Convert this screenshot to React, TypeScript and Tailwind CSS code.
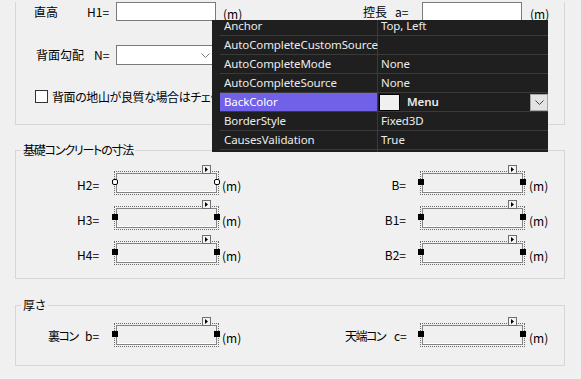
import React from "react";

function DesignBox({ primary = false }: { primary?: boolean }) {
  const handle = primary
    ? "absolute top-[7px] w-[6px] h-[6px] bg-white border border-black rounded-[2px]"
    : "absolute top-[7px] w-[6px] h-[6px] bg-black";
  return (
    <div className="relative shrink-0 w-[105px] h-[24px] border border-dotted border-[#6b6b6b] p-[1px]">
      <div className="w-full h-full border border-[#858585] bg-[#f0f0f0] shadow-[inset_0_-1px_0_#ffffff]" />
      <div className={handle + " left-[-3px]"} />
      <div className={handle + " left-[99px]"} />
      <div className="absolute left-[87px] top-[-7px] w-[9px] h-[9px] border border-[#6f6f6f] bg-[#f4f4f4] flex items-center justify-center">
        <svg width="3" height="5" viewBox="0 0 3 5">
          <path d="M0 0 L3 2.5 L0 5Z" fill="#000" />
        </svg>
      </div>
    </div>
  );
}

function Chevron({ color = "#555" }: { color?: string }) {
  return (
    <svg width="9" height="5" viewBox="0 0 9 5">
      <path d="M0.5 0.5 L4.5 4.5 L8.5 0.5" fill="none" stroke={color} strokeWidth="1" />
    </svg>
  );
}

type Row = { name: string; value?: string; color?: boolean; selected?: boolean };

const rows: Row[] = [
  { name: "Anchor", value: "Top, Left" },
  { name: "AutoCompleteCustomSource", value: "" },
  { name: "AutoCompleteMode", value: "None" },
  { name: "AutoCompleteSource", value: "None" },
  { name: "BackColor", color: true, selected: true },
  { name: "BorderStyle", value: "Fixed3D" },
  { name: "CausesValidation", value: "True" },
  { name: "", value: "" },
];

function PropertyGrid() {
  return (
    <div className="absolute left-[212px] top-[20px] w-[336px] h-[132px] bg-[#1f1f1f] overflow-hidden font-['Noto_Sans','Open_Sans',sans-serif] text-[11.5px] tracking-[-0.1px] text-[#ececec]">
      <div className="-mt-[3px]">
        {rows.map((r, i) => (
          <div key={i} className="flex ml-[8px] h-[19px] border-b border-[#3a3a3a]">
            <div
              className={
                r.selected
                  ? "w-[158px] shrink-0 border-r border-[#3a3a3a] pl-[4px] flex items-center bg-[#7160e8] text-white"
                  : "w-[158px] shrink-0 border-r border-[#3a3a3a] pl-[4px] flex items-center"
              }
            >
              {r.name}
            </div>
            {r.color ? (
              <div className="flex-1 flex items-center pl-[1px]">
                <div className="w-[21px] h-[17px] border border-black bg-[#f0f0f0]" />
                <span className="ml-[7px] font-semibold">Menu</span>
                <div className="ml-auto w-[18px] h-[17px] bg-[#e3e3e3] border border-[#a8a8a8] flex items-center justify-center">
                  <Chevron color="#444" />
                </div>
              </div>
            ) : (
              <div className="flex-1 flex items-center pl-[3px]">{r.value}</div>
            )}
          </div>
        ))}
      </div>
    </div>
  );
}

function DimRow({
  left,
  right,
  primary = false,
}: {
  left: string;
  right: string;
  primary?: boolean;
}) {
  return (
    <div className="flex items-center h-[24px]">
      <span className="ml-[61px] mt-[4px] w-[37px] shrink-0">{left}</span>
      <DesignBox primary={primary} />
      <span className="ml-[3px] mt-[5px] w-[40px] shrink-0">(m)</span>
      <span className="mt-[4px] w-[144px] shrink-0 text-right">{right}</span>
      <div className="ml-[14px]">
        <DesignBox />
      </div>
      <span className="ml-[4px] mt-[5px]">(m)</span>
    </div>
  );
}

export default function App() {
  return (
    <div className="relative w-[581px] h-[379px] overflow-hidden bg-[#f0f0f0] text-black text-[12px] leading-[14px] font-['Noto_Sans_CJK_JP','Noto_Sans',sans-serif] [font-feature-settings:'palt']">
      {/* top panel */}
      <div className="ml-[15px] w-[550px] h-[123px] border-x border-b border-[#d6d6d6]">
        <div className="flex items-center h-[19px] mt-[2px]">
          <span className="ml-[18px] w-[53px] shrink-0">直高</span>
          <span className="w-[29px] shrink-0">H1=</span>
          <div className="w-[100px] h-[19px] shrink-0 bg-white border border-[#7a7a7a]" />
          <span className="ml-[7px] mt-[4px] w-[140px] shrink-0">(m)</span>
          <span className="w-[32px] shrink-0">控長</span>
          <span className="w-[27px] shrink-0">a=</span>
          <div className="w-[100px] h-[19px] shrink-0 bg-white border border-[#7a7a7a]" />
          <span className="ml-[8px] mt-[4px]">(m)</span>
        </div>
        <div className="flex items-center h-[20px] mt-[24px]">
          <span className="ml-[20px] w-[58px] shrink-0">背面勾配</span>
          <span className="w-[22px] shrink-0">N=</span>
          <div className="w-[100px] h-[20px] shrink-0 bg-white border border-[#7a7a7a] flex items-center justify-end pr-[5px]">
            <Chevron color="#777" />
          </div>
        </div>
        <div className="flex items-center h-[13px] mt-[25px]">
          <div className="ml-[19px] w-[13px] h-[13px] shrink-0 bg-white border border-[#333333]" />
          <span className="ml-[4px] whitespace-nowrap tracking-[-0.4px]">背面の地山が良質な場合はチェックしてください</span>
        </div>
      </div>

      {/* group 1 */}
      <div className="relative mt-[25px] ml-[15px] w-[550px] border border-[#d6d6d6] pt-[20px] pb-[13px]">
        <span className="absolute left-[5px] top-[-8px] px-[2px] bg-[#f0f0f0] leading-[14px] tracking-[-1.2px] whitespace-nowrap">
          基礎コンクリートの寸法
        </span>
        <div className="flex flex-col gap-[11px]">
          <DimRow left="H2=" right="B=" primary />
          <DimRow left="H3=" right="B1=" />
          <DimRow left="H4=" right="B2=" />
        </div>
      </div>

      {/* group 2 */}
      <div className="relative mt-[26px] ml-[15px] w-[550px] border border-[#d6d6d6] pt-[17px] pb-[18px]">
        <span className="absolute left-[5px] top-[-8px] px-[2px] bg-[#f0f0f0] leading-[14px] whitespace-nowrap">
          厚さ
        </span>
        <div className="flex items-center h-[24px]">
          <span className="ml-[32px] mt-[2px] w-[37px] shrink-0 tracking-[-1.5px]">裏コン</span>
          <span className="mt-[2px] w-[29px] shrink-0">b=</span>
          <DesignBox />
          <span className="ml-[3px] mt-[5px] w-[40px] shrink-0">(m)</span>
          <span className="ml-[83px] mt-[2px] w-[49px] shrink-0 tracking-[-1.5px]">天端コン</span>
          <span className="mt-[2px] w-[26px] shrink-0">c=</span>
          <DesignBox />
          <span className="ml-[4px] mt-[5px]">(m)</span>
        </div>
      </div>

      <PropertyGrid />
    </div>
  );
}
